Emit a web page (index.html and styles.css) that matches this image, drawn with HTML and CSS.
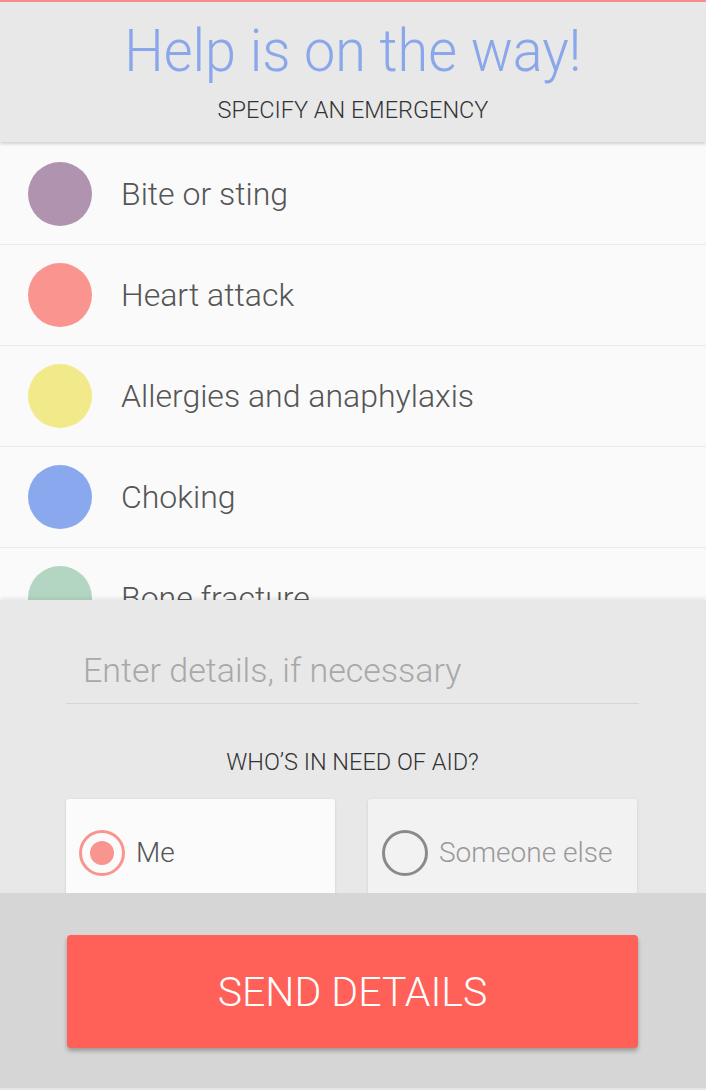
FILE: index.html
```html
<!DOCTYPE html>
<html lang="en">
<head>
<meta charset="utf-8">
<title>Help is on the way!</title>
<link rel="stylesheet" href="styles.css">
</head>
<body>
<div class="app">
  <header class="header">
    <h1 class="title">Help is on the way!</h1>
    <p class="subtitle">SPECIFY AN EMERGENCY</p>
  </header>

  <ul class="list">
    <li class="row"><span class="dot dot-bite"></span><span class="label">Bite or sting</span></li>
    <li class="row"><span class="dot dot-heart"></span><span class="label">Heart attack</span></li>
    <li class="row"><span class="dot dot-allergy"></span><span class="label">Allergies and anaphylaxis</span></li>
    <li class="row"><span class="dot dot-choking"></span><span class="label">Choking</span></li>
    <li class="row"><span class="dot dot-bone"></span><span class="label">Bone fracture</span></li>
  </ul>

  <section class="panel">
    <input class="details" type="text" placeholder="Enter details, if necessary">
    <p class="question">WHO’S IN NEED OF AID?</p>
    <div class="choices">
      <label class="choice choice-on">
        <span class="radio radio-on"><span class="radio-dot"></span></span>
        <span class="choice-text">Me</span>
      </label>
      <label class="choice choice-off">
        <span class="radio radio-off"></span>
        <span class="choice-text choice-text-off">Someone else</span>
      </label>
    </div>
  </section>

  <footer class="footer">
    <button class="send" type="button">SEND DETAILS</button>
  </footer>
</div>
</body>
</html>
```

FILE: styles.css
```css
* { box-sizing: border-box; }

html, body {
  margin: 0;
  padding: 0;
  background: #fafafa;
}

body {
  font-family: Roboto, "Noto Sans", sans-serif;
  font-weight: 300;
}

.app {
  width: 706px;
  height: 1090px;
  display: flex;
  flex-direction: column;
  overflow: hidden;
}

.header {
  flex: 0 0 142px;
  background: #e8e8e8;
  border-top: 2px solid #f68d89;
  box-shadow: 0 2px 3px rgba(0, 0, 0, 0.16);
  position: relative;
  z-index: 2;
  display: flex;
  flex-direction: column;
  align-items: center;
}

.title {
  margin: 14px 0 0;
  font-size: 60px;
  font-weight: 300;
  line-height: 70px;
  color: #89a7ea;
  white-space: nowrap;
  transform: scaleX(0.93);
}

.subtitle {
  margin: 10px 0 0;
  font-size: 23.5px;
  font-weight: 300;
  line-height: 28px;
  color: #333;
}

.list {
  flex: 0 0 458px;
  margin: 0;
  padding: 2px 0 0;
  list-style: none;
  background: #fafafa;
  overflow: hidden;
}

.row {
  height: 101px;
  display: flex;
  align-items: center;
  gap: 29px;
  padding-left: 28px;
  border-bottom: 1px solid #ececec;
}

.dot {
  width: 64px;
  height: 64px;
  border-radius: 50%;
  flex: 0 0 64px;
}

.dot-bite { background: #b093af; }
.dot-heart { background: #f9948f; }
.dot-allergy { background: #f2ea8a; }
.dot-choking { background: #8aa8ed; }
.dot-bone { background: #b3d6c3; }

.label {
  font-size: 32px;
  color: #555;
}

.panel {
  flex: 0 0 293px;
  background: #e8e8e8;
  box-shadow: 0 -2px 4px rgba(0, 0, 0, 0.08);
  position: relative;
  z-index: 2;
  padding: 36px 67px 0 66px;
  overflow: hidden;
  display: flex;
  flex-direction: column;
}

.panel > * {
  flex-shrink: 0;
}

.details {
  display: block;
  width: 100%;
  height: 68px;
  margin: 0;
  padding: 0 0 0 17px;
  border: none;
  border-bottom: 1px solid #d5d5d5;
  background: transparent;
  font-family: Roboto, "Noto Sans", sans-serif;
  font-weight: 300;
  font-size: 34px;
  color: #444;
  outline: none;
}

.details::placeholder {
  color: #a8a8a8;
}

.question {
  margin: 43px 0 0;
  text-align: center;
  font-size: 23.5px;
  font-weight: 300;
  line-height: 30px;
  color: #333;
}

.choices {
  margin-top: 22px;
  display: grid;
  grid-template-columns: 269px 269px;
  gap: 33px;
}

.choice {
  height: 120px;
  border-radius: 3px 3px 0 0;
  box-shadow: 0 1px 3px rgba(0, 0, 0, 0.13);
  display: flex;
  align-items: flex-start;
  padding-top: 31px;
}

.choice-on {
  background: #fbfbfb;
  padding-left: 13px;
  gap: 11px;
}

.choice-off {
  background: #f2f2f2;
  padding-left: 14px;
  gap: 11px;
}

.radio {
  width: 46px;
  height: 46px;
  flex: 0 0 46px;
  border-radius: 50%;
  display: flex;
  align-items: center;
  justify-content: center;
}

.radio-on { border: 3px solid #f9958f; }
.radio-off { border: 3px solid #8a8a8a; }

.radio-dot {
  width: 24px;
  height: 24px;
  border-radius: 50%;
  background: #f9958f;
}

.choice-text {
  font-size: 28px;
  line-height: 46px;
  color: #555;
}

.choice-text-off {
  color: #999;
}

.footer {
  flex: 1 1 auto;
  background: #d6d6d6;
  border-bottom: 2px solid #e6e6e6;
  padding: 42px 68px 0 67px;
  position: relative;
  z-index: 3;
}

.send {
  display: block;
  width: 100%;
  height: 113px;
  border: none;
  border-radius: 4px;
  background: #ff6058;
  box-shadow: 0 3px 4px rgba(0, 0, 0, 0.28);
  color: #fff;
  font-family: Roboto, "Noto Sans", sans-serif;
  font-weight: 300;
  font-size: 41px;
  letter-spacing: 0;
  cursor: pointer;
}
```
